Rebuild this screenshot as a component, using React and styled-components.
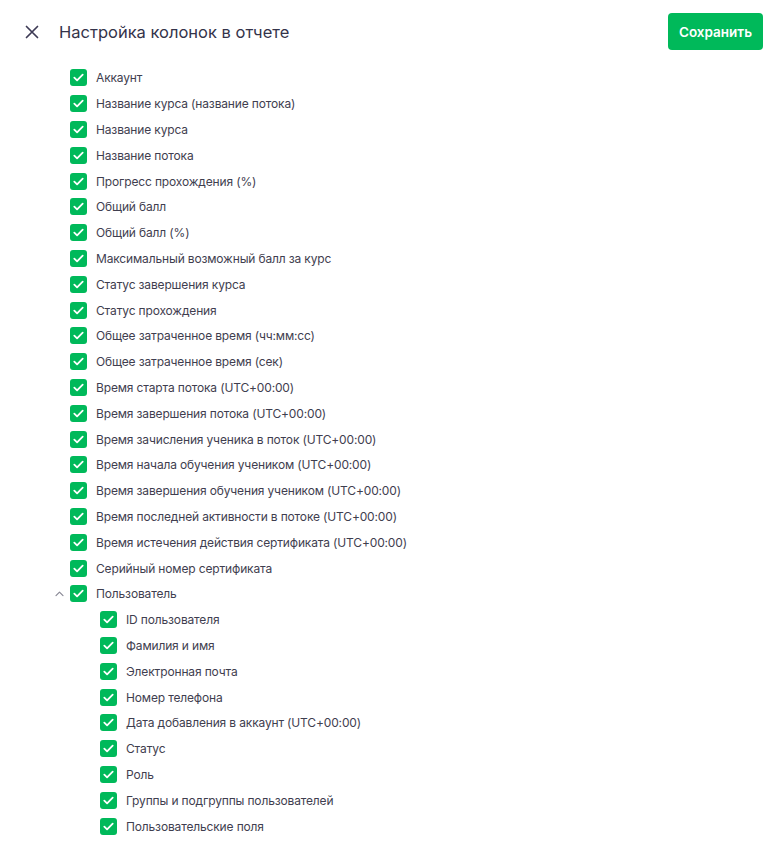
import React from "react";
import styled, { createGlobalStyle } from "styled-components";

const GlobalStyle = createGlobalStyle`
  body {
    margin: 0;
    background: #ffffff;
    font-family: "Inter", "Roboto", sans-serif;
  }
`;

const Page = styled.div`
  width: 781px;
  min-height: 850px;
  box-sizing: border-box;
  padding: 13px 18px 0 24px;
`;

const Header = styled.div`
  display: flex;
  align-items: center;
  height: 37px;
`;

const CloseButton = styled.button`
  width: 16px;
  height: 16px;
  padding: 0;
  border: none;
  background: transparent;
  display: flex;
  align-items: center;
  justify-content: center;
  cursor: pointer;
  margin-right: 19px;
`;

const Title = styled.h1`
  flex: 1;
  margin: 0;
  font-size: 16.5px;
  font-weight: 400;
  color: #34334a;
`;

const SaveButton = styled.button`
  height: 37px;
  padding: 0 11px;
  border: none;
  border-radius: 4px;
  background: #00b95a;
  color: #ffffff;
  font-family: "Inter", sans-serif;
  font-size: 13.5px;
  font-weight: 600;
  cursor: pointer;
`;

const List = styled.div`
  display: flex;
  flex-direction: column;
  margin-top: 15px;
`;

const Row = styled.label`
  position: relative;
  display: flex;
  align-items: center;
  height: 25.8px;
  padding-left: ${({ $nested }) => ($nested ? 76 : 46)}px;
  cursor: pointer;
`;

const Chevron = styled.span`
  position: absolute;
  left: 31px;
  top: 50%;
  transform: translateY(-55%);
  display: flex;
`;

const Box = styled.span`
  width: 17px;
  height: 17px;
  border-radius: 3px;
  background: #00b95a;
  display: flex;
  align-items: center;
  justify-content: center;
  margin-right: 9px;
  flex-shrink: 0;
`;

const Label = styled.span`
  font-size: 12px;
  color: #3f3e4f;
  letter-spacing: -0.15px;
`;

const topItems = [
  "Аккаунт",
  "Название курса (название потока)",
  "Название курса",
  "Название потока",
  "Прогресс прохождения (%)",
  "Общий балл",
  "Общий балл (%)",
  "Максимальный возможный балл за курс",
  "Статус завершения курса",
  "Статус прохождения",
  "Общее затраченное время (чч:мм:сс)",
  "Общее затраченное время (сек)",
  "Время старта потока (UTC+00:00)",
  "Время завершения потока (UTC+00:00)",
  "Время зачисления ученика в поток (UTC+00:00)",
  "Время начала обучения учеником (UTC+00:00)",
  "Время завершения обучения учеником (UTC+00:00)",
  "Время последней активности в потоке (UTC+00:00)",
  "Время истечения действия сертификата (UTC+00:00)",
  "Серийный номер сертификата",
];

const userItems = [
  "ID пользователя",
  "Фамилия и имя",
  "Электронная почта",
  "Номер телефона",
  "Дата добавления в аккаунт (UTC+00:00)",
  "Статус",
  "Роль",
  "Группы и подгруппы пользователей",
  "Пользовательские поля",
];

function Check() {
  return (
    <Box>
      <svg width="11" height="9" viewBox="0 0 11 9" fill="none">
        <path d="M1.3 4.6 L4.1 7.3 L9.7 1.6" stroke="#fff" strokeWidth="1.8" strokeLinecap="round" strokeLinejoin="round" />
      </svg>
    </Box>
  );
}

function Item({ text, nested, chevron }) {
  return (
    <Row $nested={nested}>
      {chevron && (
        <Chevron>
          <svg width="9" height="6" viewBox="0 0 9 6" fill="none">
            <path d="M1 5 L4.5 1.5 L8 5" stroke="#8a8996" strokeWidth="1.2" strokeLinecap="round" strokeLinejoin="round" />
          </svg>
        </Chevron>
      )}
      <Check />
      <Label>{text}</Label>
    </Row>
  );
}

export default function App() {
  return (
    <>
      <GlobalStyle />
      <Page>
        <Header>
          <CloseButton aria-label="Закрыть">
            <svg width="14" height="14" viewBox="0 0 14 14" fill="none">
              <path d="M1.5 1.5 L12.5 12.5 M12.5 1.5 L1.5 12.5" stroke="#3d3a55" strokeWidth="1.7" strokeLinecap="round" />
            </svg>
          </CloseButton>
          <Title>Настройка колонок в отчете</Title>
          <SaveButton>Сохранить</SaveButton>
        </Header>
        <List>
          {topItems.map((t) => (
            <Item key={t} text={t} />
          ))}
          <Item text="Пользователь" chevron />
          {userItems.map((t) => (
            <Item key={t} text={t} nested />
          ))}
        </List>
      </Page>
    </>
  );
}
